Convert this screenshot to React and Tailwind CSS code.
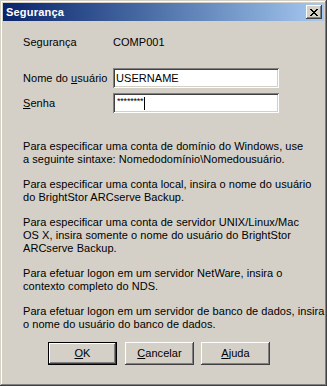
import React from 'react';

// Win2000-style bevels
const raised =
  'shadow-[inset_-1px_-1px_#404040,inset_1px_1px_#ffffff,inset_-2px_-2px_#808080,inset_2px_2px_#d4d0c8]';
const sunken =
  'shadow-[inset_1px_1px_#808080,inset_-1px_-1px_#ffffff,inset_2px_2px_#404040,inset_-2px_-2px_#d4d0c8]';

const paragraphs = [
  ['Para especificar uma conta de domínio do Windows, use', 'a seguinte sintaxe: Nomedodomínio\\Nomedousuário.'],
  ['Para especificar uma conta local, insira o nome do usuário', 'do BrightStor ARCserve Backup.'],
  [
    'Para especificar uma conta de servidor UNIX/Linux/Mac',
    'OS X, insira somente o nome do usuário do BrightStor',
    'ARCserve Backup.',
  ],
  ['Para efetuar logon em um servidor NetWare, insira o', 'contexto completo do NDS.'],
  ['Para efetuar logon em um servidor de banco de dados, insira', 'o nome do usuário do banco de dados.'],
];

function CloseButton() {
  return (
    <div className={`w-[16px] h-[14px] bg-[#d4d0c8] flex items-center justify-center ${raised}`}>
      <svg width="8" height="7" viewBox="0 0 8 7" shapeRendering="crispEdges">
        <path
          d="M0 0h2v1H0zM6 0h2v1H6zM1 1h2v1H1zM5 1h2v1H5zM2 2h4v1H2zM3 3h2v1H3zM2 4h4v1H2zM1 5h2v1H1zM5 5h2v1H5zM0 6h2v1H0zM6 6h2v1H6z"
          fill="#000"
        />
      </svg>
    </div>
  );
}

function Button({ children, isDefault }) {
  if (isDefault) {
    return (
      <div className="w-[69px] h-[23px] border border-black">
        <div className={`w-full h-full bg-[#d4d0c8] flex items-center justify-center ${raised}`}>{children}</div>
      </div>
    );
  }
  return (
    <div className={`w-[69px] h-[23px] bg-[#d4d0c8] flex items-center justify-center ${raised}`}>{children}</div>
  );
}

export default function App() {
  return (
    <div
      className={`w-[327px] h-[386px] bg-[#d4d0c8] p-[3px] flex flex-col text-[11px] leading-[13px] tracking-[0.05px] text-black font-['Liberation_Sans',Arial,sans-serif] shadow-[inset_-1px_-1px_#404040,inset_1px_1px_#d4d0c8,inset_-2px_-2px_#808080,inset_2px_2px_#ffffff]`}
    >
      {/* Title bar */}
      <div className="h-[18px] flex items-center justify-between pl-[3px] pr-[2px] bg-gradient-to-r from-[#0a246a] to-[#a6caf0]">
        <span className="text-white font-bold text-[11px] tracking-[0.2px]">Segurança</span>
        <CloseButton />
      </div>

      {/* Body */}
      <div className="flex flex-col pl-[20px]">
        <div className="flex mt-[15px] h-[13px]">
          <span className="w-[90px]">Segurança</span>
          <span>COMP001</span>
        </div>

        <div className="flex items-center mt-[19px]">
          <span className="w-[90px]">
            Nome do <span className="underline">u</span>suário
          </span>
          <div className={`w-[166px] h-[20px] bg-white flex items-center px-[3px] ${sunken}`}>USERNAME</div>
        </div>

        <div className="flex items-center mt-[5px]">
          <span className="w-[90px]">
            <span className="underline">S</span>enha
          </span>
          <div className={`w-[166px] h-[20px] bg-white flex items-center pl-[4px] ${sunken}`}>
            <span className="text-[9px] leading-[9px] tracking-[-0.2px] -mt-[3px]">********</span>
            <span className="w-px h-[13px] bg-black ml-[1px]" />
          </div>
        </div>

        <div className="flex flex-col gap-[12px] mt-[27px]">
          {paragraphs.map((lines, i) => (
            <p key={i}>
              {lines.map((line, j) => (
                <span key={j} className="block whitespace-nowrap">
                  {line}
                </span>
              ))}
            </p>
          ))}
        </div>
      </div>

      <div className="flex pl-[45px] mt-[11px] gap-[8px]">
        <Button isDefault>
          <span className="underline">O</span>K
        </Button>
        <Button>
          <span className="underline">C</span>ancelar
        </Button>
        <div className="-ml-[1px]">
          <Button>
            <span className="underline">A</span>juda
          </Button>
        </div>
      </div>
    </div>
  );
}
